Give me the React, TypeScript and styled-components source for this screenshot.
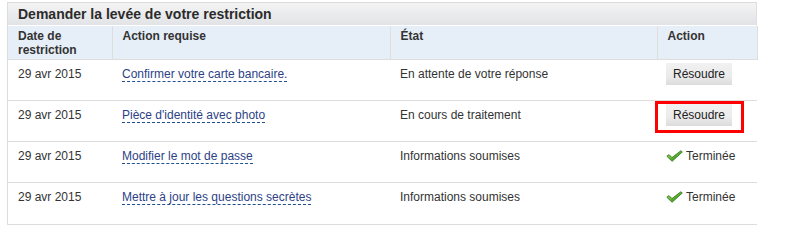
import styled, { createGlobalStyle } from "styled-components";

const GlobalStyle = createGlobalStyle`
  body {
    margin: 0;
    background: #fff;
    font-family: "Liberation Sans", Arial, sans-serif;
    color: #333;
  }
`;

const Page = styled.div`
  padding: 2px 0 0 7px;
`;

const Panel = styled.div`
  width: 750px;
  box-sizing: border-box;
  border-left: 1px solid #ddd;
  border-bottom: 1px solid #ddd;
`;

const TitleBar = styled.h2`
  margin: 0;
  height: 24px;
  box-sizing: border-box;
  border-top: 1px solid #dcdcdc;
  border-right: 1px solid #dedede;
  border-bottom: 1px solid #fff;
  padding-left: 10px;
  background: linear-gradient(#f4f4f4, #e1e3e6);
  font-size: 14px;
  font-weight: bold;
  line-height: 22px;
  color: #2b2b2b;
`;

const Table = styled.table`
  width: 100%;
  border-collapse: collapse;
  table-layout: fixed;
  font-size: 12px;
  line-height: 14px;
`;

const HeadRow = styled.tr`
  background: #e6eef8;
  height: 33px;
`;

const HeadCell = styled.th<{ $w: number; $first?: boolean }>`
  width: ${(p) => p.$w}px;
  box-sizing: border-box;
  padding: 3px 10px 2px;
  text-align: left;
  vertical-align: top;
  font-weight: bold;
  color: #333;
  border-left: ${(p) => (p.$first ? "none" : "1px solid #d6dde6")};
  border-right: 1px solid #dedede;
`;

const BodyRow = styled.tr`
  border-top: 1px solid #ddd;
`;

const Cell = styled.td`
  box-sizing: border-box;
  height: 41px;
  padding: 7px 10px 0;
  vertical-align: top;
  color: #333;
  white-space: nowrap;
`;

const Line = styled.div`
  height: 14px;
  line-height: 14px;
`;

const DashedLink = styled.span`
  color: #2d3f86;
  border-bottom: 1px dashed #1f4f8f;
  cursor: pointer;
`;

const ButtonWrap = styled.span`
  position: relative;
  display: inline-block;
  vertical-align: top;
  margin-top: -4px;
  height: 22px;
`;

const ResolveButton = styled.button`
  display: block;
  height: 22px;
  padding: 0 7px;
  border: none;
  background: linear-gradient(#f1f1f1 0%, #ebebeb 60%, #dcdcdc 100%);
  font-family: "Liberation Sans", Arial, sans-serif;
  font-size: 12px;
  color: #222;
  cursor: pointer;
  margin-left: -1px;
`;

const Highlight = styled.span`
  position: absolute;
  top: -3px;
  left: -12px;
  right: -12px;
  bottom: -7px;
  border: 3px solid #f00;
  pointer-events: none;
`;

const Done = styled.span`
  display: inline-flex;
  align-items: center;
  gap: 3px;
  height: 14px;
  vertical-align: top;
  margin-left: -1px;
`;

const Check = () => (
  <svg width="17" height="12" viewBox="0 0 17 12">
    <defs>
      <linearGradient id="chk" x1="0" y1="0" x2="1" y2="1">
        <stop offset="0" stopColor="#b8e88a" />
        <stop offset="0.5" stopColor="#5cb532" />
        <stop offset="1" stopColor="#2b7a12" />
      </linearGradient>
    </defs>
    <path
      d="M0.8 6.2 L3 4.6 L6 7.6 L14.8 0.8 L16.3 2 L6.1 11.3 Z"
      fill="url(#chk)"
      stroke="#2f6e18"
      strokeWidth="0.8"
      strokeLinejoin="round"
    />
  </svg>
);

type Row = {
  date: string;
  action: string;
  state: string;
  done?: boolean;
  marked?: boolean;
};

const rows: Row[] = [
  { date: "29 avr 2015", action: "Confirmer votre carte bancaire.", state: "En attente de votre réponse" },
  { date: "29 avr 2015", action: "Pièce d'identité avec photo", state: "En cours de traitement", marked: true },
  { date: "29 avr 2015", action: "Modifier le mot de passe", state: "Informations soumises", done: true },
  { date: "29 avr 2015", action: "Mettre à jour les questions secrètes", state: "Informations soumises", done: true },
];

const App = () => {
  return (
    <Page>
      <GlobalStyle />
      <Panel>
        <TitleBar>Demander la levée de votre restriction</TitleBar>
        <Table>
          <thead>
            <HeadRow>
              <HeadCell $w={104} $first>
                Date de restriction
              </HeadCell>
              <HeadCell $w={278}>Action requise</HeadCell>
              <HeadCell $w={267}>État</HeadCell>
              <HeadCell $w={100}>Action</HeadCell>
            </HeadRow>
          </thead>
          <tbody>
            {rows.map((r, i) => (
              <BodyRow key={i}>
                <Cell>
                  <Line>{r.date}</Line>
                </Cell>
                <Cell>
                  <Line>
                    <DashedLink>{r.action}</DashedLink>
                  </Line>
                </Cell>
                <Cell>
                  <Line>{r.state}</Line>
                </Cell>
                <Cell>
                  <Line>
                    {r.done ? (
                      <Done>
                        <Check />
                        Terminée
                      </Done>
                    ) : (
                      <ButtonWrap>
                        <ResolveButton>Résoudre</ResolveButton>
                        {r.marked && <Highlight />}
                      </ButtonWrap>
                    )}
                  </Line>
                </Cell>
              </BodyRow>
            ))}
          </tbody>
        </Table>
      </Panel>
    </Page>
  );
};

export default App;
